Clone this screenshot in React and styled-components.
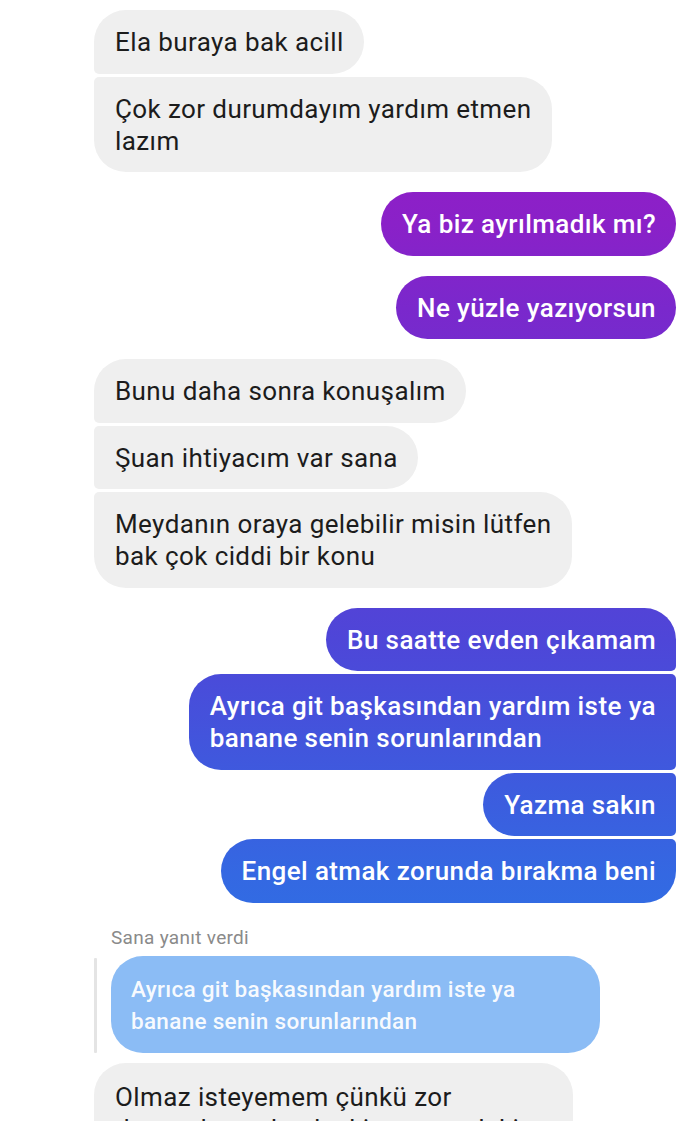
import React from 'react'
import styled, { createGlobalStyle, css } from 'styled-components'

const GlobalStyle = createGlobalStyle`
    html, body {
        margin: 0;
        padding: 0;
        background: #fff;
    }
    body {
        font-family: Roboto, "Noto Sans", "Liberation Sans", sans-serif;
        -webkit-font-smoothing: antialiased;
    }
`

const BIG = '32px'
const SMALL = '5px'

const corners = (side, pos) => {
    const top = pos === 'single' || pos === 'first' ? BIG : SMALL
    const bottom = pos === 'single' || pos === 'last' ? BIG : SMALL
    if (side === 'in') {
        return `${top} ${BIG} ${BIG} ${bottom}`
    }
    return `${BIG} ${top} ${bottom} ${BIG}`
}

const Screen = styled.div`
    height: 1121px;
    overflow: hidden;
    padding: 10px 14px 0 94px;
    box-sizing: border-box;
    display: flex;
    flex-direction: column;
`

const Group = styled.div`
    display: flex;
    flex-direction: column;
    align-items: ${p => (p.$side === 'out' ? 'flex-end' : 'flex-start')};
    gap: ${p => p.$gap || 3}px;
    margin-bottom: 20px;
`

const Bubble = styled.div`
    box-sizing: border-box;
    padding: ${p => p.$padTop || 16}px 20px 15.5px 21px;
    font-size: 26px;
    letter-spacing: 0.4px;
    line-height: 32px;
    white-space: nowrap;
    border-radius: ${p => corners(p.$side, p.$pos)};

    ${p => p.$side === 'in' ? css`
        background: #efefef;
        color: #1c1c1c;
        font-weight: 400;
    ` : css`
        color: #fff;
        font-weight: 500;
        background: linear-gradient(
            to bottom,
            #9c16c4 0%,
            #8a21c8 20%,
            #7a28cc 27.5%,
            #4e46d8 57%,
            #3d5bde 70%,
            #3468e2 78%,
            #2180e9 100%
        );
        background-attachment: fixed;
    `}
`

const ReplyLabel = styled.div`
    margin: 4px 0 7px 17px;
    font-size: 19px;
    letter-spacing: 0.3px;
    line-height: 22px;
    color: #8a8a8a;
`

const ReplyRow = styled.div`
    display: flex;
    gap: 14px;
    margin-bottom: 10px;
`

const ReplyBar = styled.div`
    width: 3px;
    margin-top: 2px;
    background: #e4e4e4;
    border-radius: 1px;
`

const ReplyBubble = styled.div`
    width: 489px;
    box-sizing: border-box;
    padding: 17px 20px 16px;
    background: #8bbcf5;
    color: rgba(255, 255, 255, 0.95);
    font-size: 22.5px;
    letter-spacing: 0.3px;
    line-height: 32px;
    font-weight: 500;
    white-space: nowrap;
    border-radius: 32px;
`

const Lines = ({ lines }) =>
    lines.map((l, i) => (
        <React.Fragment key={i}>
            {i > 0 && <br />}
            {l}
        </React.Fragment>
    ))

const groups = [
    { side: 'in', msgs: [['Ela buraya bak acill'], ['Çok zor durumdayım yardım etmen', 'lazım']] },
    { side: 'out', gap: 20, single: true, msgs: [['Ya biz ayrılmadık mı?'], ['Ne yüzle yazıyorsun']] },
    {
        side: 'in',
        msgs: [
            ['Bunu daha sonra konuşalım'],
            ['Şuan ihtiyacım var sana'],
            ['Meydanın oraya gelebilir misin lütfen', 'bak çok ciddi bir konu'],
        ],
    },
    {
        side: 'out',
        msgs: [
            ['Bu saatte evden çıkamam'],
            ['Ayrıca git başkasından yardım iste ya', 'banane senin sorunlarından'],
            ['Yazma sakın'],
            ['Engel atmak zorunda bırakma beni'],
        ],
    },
]

const posOf = (i, n, single) => {
    if (single || n === 1) return 'single'
    if (i === 0) return 'first'
    if (i === n - 1) return 'last'
    return 'middle'
}

const App = () => {
    return (
        <>
            <GlobalStyle />
            <Screen>
                {groups.map((g, gi) => (
                    <Group key={gi} $side={g.side} $gap={g.gap}>
                        {g.msgs.map((m, i) => (
                            <Bubble key={i} $side={g.side} $pos={posOf(i, g.msgs.length, g.single)}>
                                <Lines lines={m} />
                            </Bubble>
                        ))}
                    </Group>
                ))}

                <ReplyLabel>Sana yanıt verdi</ReplyLabel>
                <ReplyRow>
                    <ReplyBar />
                    <ReplyBubble>
                        <Lines lines={['Ayrıca git başkasından yardım iste ya', 'banane senin sorunlarından']} />
                    </ReplyBubble>
                </ReplyRow>

                <Group $side="in">
                    <Bubble $side="in" $pos="single" $padTop={18}>
                        <Lines lines={['Olmaz isteyemem çünkü zor', 'durumdayım başka kimsem yok ki ya']} />
                    </Bubble>
                </Group>
            </Screen>
        </>
    )
}

export default App
